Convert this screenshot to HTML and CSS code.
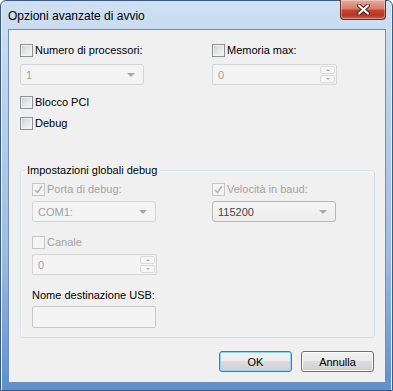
FILE: index.html
```html
<!DOCTYPE html>
<html lang="it">
<head>
  <meta charset="UTF-8">
  <meta name="viewport" content="width=device-width, initial-scale=1.0">
  <title>Opzioni avanzate di avvio</title>
  <link rel="stylesheet" href="styles.css">
</head>
<body>
  <div class="window">
    <div class="titlebar">
      <span class="title">Opzioni avanzate di avvio</span>
      <button class="close-btn" aria-label="Chiudi">
        <svg width="13" height="11" viewBox="0 0 13 11">
          <path d="M2 1.5 L11 9.5 M11 1.5 L2 9.5" stroke="#4a1a14" stroke-width="4" stroke-linecap="round"/>
          <path d="M2 1.5 L11 9.5 M11 1.5 L2 9.5" stroke="#fff" stroke-width="2.2" stroke-linecap="round"/>
        </svg>
      </button>
    </div>

    <div class="client">
      <div class="cols">
        <div class="col col-left">
          <label class="check"><span class="box"></span>Numero di processori:</label>
          <div class="combo disabled"><span class="value">1</span><span class="arrow"></span></div>
          <label class="check mt-pci"><span class="box"></span>Blocco PCI</label>
          <label class="check mt-debug"><span class="box"></span>Debug</label>
        </div>
        <div class="col">
          <label class="check"><span class="box"></span>Memoria max:</label>
          <div class="spin disabled">
            <span class="value">0</span>
            <span class="spin-btns">
              <span class="spin-up"></span>
              <span class="spin-down"></span>
            </span>
          </div>
        </div>
      </div>

      <fieldset class="group">
        <legend>Impostazioni globali debug</legend>
        <div class="cols">
          <div class="col col-inner-left">
            <label class="check off"><span class="box checked">
              <svg width="9" height="9" viewBox="0 0 9 9"><path d="M1 5 L3.5 7.5 L8 1" fill="none" stroke="#b5b5b5" stroke-width="1.6"/></svg>
            </span>Porta di debug:</label>
            <div class="combo disabled"><span class="value">COM1:</span><span class="arrow"></span></div>
            <label class="check off mt-canale"><span class="box"></span>Canale</label>
            <div class="spin disabled">
              <span class="value">0</span>
              <span class="spin-btns">
                <span class="spin-up"></span>
                <span class="spin-down"></span>
              </span>
            </div>
            <div class="field-label">Nome destinazione USB:</div>
            <div class="textbox"></div>
          </div>
          <div class="col">
            <label class="check off"><span class="box checked">
              <svg width="9" height="9" viewBox="0 0 9 9"><path d="M1 5 L3.5 7.5 L8 1" fill="none" stroke="#b5b5b5" stroke-width="1.6"/></svg>
            </span>Velocità in baud:</label>
            <div class="combo"><span class="value">115200</span><span class="arrow"></span></div>
          </div>
        </div>
      </fieldset>

      <div class="buttons">
        <button class="btn default">OK</button>
        <button class="btn">Annulla</button>
      </div>
    </div>
  </div>
</body>
</html>
```

FILE: styles.css
```css
/* Window frame */
body {
  margin: 0;
  background-color: #fff;
  font-family: "Liberation Sans", Arial, sans-serif;
  font-size: 11px;
  color: #000;
}

.window {
  width: 393px;
  height: 391px;
  box-sizing: border-box;
  border: 1px solid #3b5a82;
  border-radius: 6px 6px 0 0;
  padding: 0 6px 7px 7px;
  display: flex;
  flex-direction: column;
  background: linear-gradient(to bottom, #cfe0f3 0%, #b7cfea 30%, #9dbce2 65%, #5f8fcc 100%);
  box-shadow: inset 1px 0 0 #e6f0fa, inset -1px 0 0 #e6f0fa;
}

.titlebar {
  height: 28px;
  display: flex;
  justify-content: space-between;
  flex-shrink: 0;
}

.title {
  align-self: center;
  font-size: 12px;
  padding-top: 2px;
}

.close-btn {
  width: 46px;
  height: 20px;
  margin-top: -1px;
  padding: 0;
  border: 1px solid #6b2b24;
  border-top: none;
  border-radius: 0 0 4px 4px;
  background: linear-gradient(to bottom, #e6a99c 0%, #d57e6c 45%, #c4442f 55%, #b83522 80%, #d06046 100%);
  box-shadow: inset 0 0 0 1px rgba(255, 255, 255, 0.35);
  display: flex;
  align-items: center;
  justify-content: center;
}

.client {
  flex: 1;
  border: 1px solid #6e8fba;
  background-color: #f0f0f0;
  padding: 14px 10px 0 11px;
}

/* Layout */
.cols {
  display: flex;
}

.col {
  display: flex;
  flex-direction: column;
  align-items: flex-start;
}

.col-left {
  width: 192px;
}

.col-inner-left {
  width: 180px;
}

/* Checkboxes */
.check {
  display: flex;
  align-items: center;
  gap: 2px;
  height: 13px;
  line-height: 13px;
}

.check.off {
  color: #a3a3a3;
}

.box {
  width: 11px;
  height: 11px;
  border: 1px solid #8e8f8f;
  background: linear-gradient(135deg, #c9ccd1 0%, #e9eaec 60%, #f7f7f7 100%);
  box-shadow: inset 0 0 0 1px #f2f2f2;
  display: flex;
  align-items: center;
  justify-content: center;
}

.check.off .box {
  border-color: #c6c6c6;
  background: #f4f4f4;
  box-shadow: none;
}

.mt-pci {
  margin-top: 11px;
}

.mt-debug {
  margin-top: 8px;
}

.mt-canale {
  margin-top: 14px;
}

/* Combo and spin boxes */
.combo,
.spin {
  position: relative;
  width: 124px;
  height: 21px;
  box-sizing: border-box;
  border: 1px solid #d5d5d5;
  border-radius: 3px;
  background-color: #f4f4f4;
  display: flex;
  align-items: center;
  padding-left: 5px;
  margin-top: 7px;
}

.combo.disabled .value,
.spin.disabled .value {
  color: #a0a0a0;
}

.group .combo,
.group .spin {
  margin-top: 5px;
}

.combo .value {
  flex: 1;
  color: #444;
}

.combo:not(.disabled) {
  border-color: #b8b8b8;
  background: linear-gradient(to bottom, #f6f6f6, #ececec);
}

.arrow {
  width: 0;
  height: 0;
  margin-right: 8px;
  border-left: 4px solid transparent;
  border-right: 4px solid transparent;
  border-top: 4px solid #a9a9a9;
}

.spin {
  width: 125px;
  border-radius: 2px;
  justify-content: space-between;
}

.spin-btns {
  display: flex;
  flex-direction: column;
  gap: 1px;
  margin-right: 1px;
}

.spin-up,
.spin-down {
  width: 15px;
  height: 8px;
  box-sizing: border-box;
  border: 1px solid #dadada;
  border-radius: 2px;
  background-color: #f6f6f6;
  display: flex;
  align-items: center;
  justify-content: center;
}

.spin-up::after,
.spin-down::after {
  content: "";
  border-left: 2px solid transparent;
  border-right: 2px solid transparent;
}

.spin-up::after {
  border-bottom: 2px solid #b0b0b0;
}

.spin-down::after {
  border-top: 2px solid #b0b0b0;
}

/* Group box */
.group {
  margin: 34px 0 0 0;
  padding: 6px 11px 9px 11px;
  border: 1px solid #d5dfe5;
  border-radius: 3px;
  box-shadow: inset 1px 1px 0 #fff;
  min-width: 0;
}

.group legend {
  padding: 0 2px;
  margin-left: -7px;
  line-height: 13px;
}

.field-label {
  margin-top: 14px;
  line-height: 13px;
}

.textbox {
  width: 124px;
  height: 22px;
  box-sizing: border-box;
  margin-top: 4px;
  border: 1px solid #c9c9c9;
  border-radius: 2px;
  background-color: #f4f4f4;
}

/* Buttons */
.buttons {
  display: flex;
  justify-content: flex-end;
  gap: 9px;
  margin-top: 13px;
  padding-right: 1px;
}

.btn {
  width: 73px;
  height: 21px;
  padding: 0;
  font-family: "Liberation Sans", Arial, sans-serif;
  font-size: 11px;
  color: #000;
  border: 1px solid #707070;
  border-radius: 3px;
  background: linear-gradient(to bottom, #f2f2f2 0%, #ebebeb 50%, #dddddd 50%, #cfcfcf 100%);
  box-shadow: inset 0 0 0 1px #fcfcfc;
}

.btn.default {
  border-color: #3c7fb1;
  box-shadow: inset 0 0 0 1px #8fd6f5;
}
```
